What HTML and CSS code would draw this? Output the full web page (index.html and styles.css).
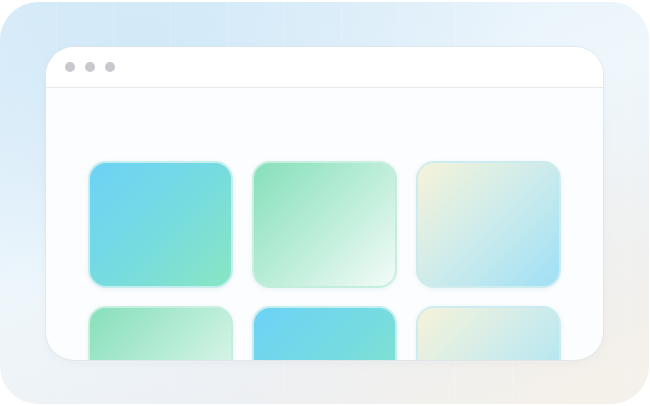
FILE: index.html
```html
<!DOCTYPE html>
<html lang="en">

<head>
  <meta charset="UTF-8">
  <meta name="viewport" content="width=device-width, initial-scale=1.0">
  <title>Window Grid</title>
  <link rel="stylesheet" href="styles.css">
</head>

<body>
  <div class="frame">
    <div class="window">
      <div class="window-bar">
        <span class="dot"></span>
        <span class="dot"></span>
        <span class="dot"></span>
      </div>
      <div class="window-body">
        <div class="tile tile-blue"></div>
        <div class="tile tile-mint"></div>
        <div class="tile tile-sky"></div>
        <div class="tile tile-mint"></div>
        <div class="tile tile-blue"></div>
        <div class="tile tile-sky"></div>
      </div>
    </div>
  </div>
</body>

</html>
```

FILE: styles.css
```css
html,
body {
  margin: 0;
  background-color: #fff;
}

/* soft tinted backdrop with a faint column grid */
.frame {
  box-sizing: border-box;
  width: 649px;
  height: 402px;
  margin-top: 2px;
  padding: 45px 46px 44px 46px;
  border-radius: 38px;
  background:
    repeating-linear-gradient(90deg, rgba(255, 255, 255, 0) 0, rgba(255, 255, 255, 0) 56px, rgba(255, 255, 255, 0.14) 56px, rgba(255, 255, 255, 0.14) 57px),
    radial-gradient(ellipse at 22% 8%, #d2e9f8 0%, rgba(210, 233, 248, 0) 55%),
    radial-gradient(ellipse at 100% 100%, #f5f1ea 0%, rgba(245, 241, 234, 0) 50%),
    linear-gradient(160deg, #dfeef9 0%, #eff7fc 45%, #eceff3 80%, #f1f0ec 100%);
}

.window {
  height: 100%;
  display: flex;
  flex-direction: column;
  overflow: hidden;
  border-radius: 28px;
  background-color: #fcfdfe;
  box-shadow: 0 0 0 1px rgba(220, 226, 232, 0.6), 0 3px 10px rgba(150, 170, 190, 0.08);
}

.window-bar {
  flex: 0 0 auto;
  height: 40px;
  display: flex;
  align-items: center;
  gap: 10px;
  padding-left: 19px;
  background-color: #fff;
  border-bottom: 1px solid #e7e9ec;
}

.dot {
  width: 10px;
  height: 10px;
  border-radius: 50%;
  background-color: #c7c9ce;
}

.window-body {
  flex: 1 1 auto;
  display: grid;
  grid-template-columns: 145px 145px 145px;
  grid-auto-rows: 127px;
  column-gap: 19px;
  row-gap: 18px;
  padding: 73px 42px 0 42px;
}

.tile {
  box-sizing: border-box;
  border-radius: 18px;
  border: 2px solid rgba(205, 240, 240, 0.9);
  box-shadow: 0 1px 5px rgba(120, 190, 210, 0.16);
}

.tile-blue {
  background: linear-gradient(135deg, #6dd2f6 0%, #76dbe0 50%, #88e6c3 100%);
}

.tile-mint {
  background: linear-gradient(135deg, #86dfbb 0%, #bbedd8 50%, #f3fbf8 100%);
  border-color: rgba(200, 238, 222, 0.9);
}

.tile-sky {
  background: linear-gradient(135deg, #f6f3da 0%, #cdebeb 50%, #9fe0f6 100%);
  border-color: rgba(205, 236, 240, 0.9);
}
```
